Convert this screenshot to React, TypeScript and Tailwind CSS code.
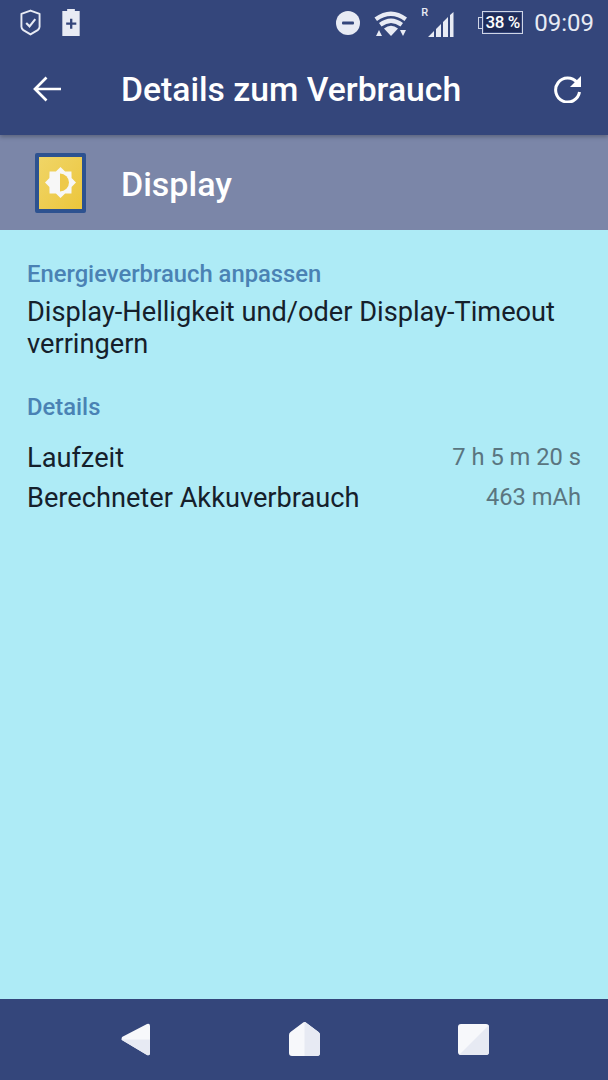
export default function App() {
  return (
    <div className="w-[608px] h-[1080px] flex flex-col bg-[#aeebf6] overflow-hidden font-['Roboto',sans-serif]">
      <div className="h-[135px] shrink-0 bg-[#34467b] flex flex-col relative z-10 shadow-[0_2px_4px_rgba(0,0,0,0.25)]">
        <div className="h-[44px] flex items-center pl-[20px] pr-[14px] pt-[1px]">
          <svg width="21" height="27" viewBox="0 0 22 28" fill="none">
            <path d="M11 1.500 20.500 5v13.500q0 2-2 3.500L11 26.500 3.500 22q-2-1.500-2-3.500V5Z" stroke="#e8ebf4" strokeWidth="2" strokeLinejoin="round" />
            <path d="M6.500 14.500 10 18l6-7.500" stroke="#e8ebf4" strokeWidth="2.200" />
          </svg>
          <svg width="18" height="27" viewBox="0 0 18 28" className="ml-[21px]">
            <path d="M5 0h8v2h5v26H0V2h5Z" fill="#e8ebf4" />
            <path d="M8 10h2.400v4H14.500v2.400h-4.100v4H8v-4H4v-2.400h4Z" fill="#34467b" />
          </svg>
          <div className="flex-1" />
          <svg width="24" height="24" viewBox="0 0 24 24">
            <circle cx="12" cy="12" r="12" fill="#e8ebf4" />
            <rect x="6" y="10.500" width="12" height="3" rx="1" fill="#34467b" />
          </svg>
          <svg width="34" height="28" viewBox="0 0 34 28" className="ml-[14px] mt-[1px]">
            <path d="M0.500 8.500Q17-3.500 33 8.500l-2.500 3.500Q17 2 3 12Z" fill="#e8ebf4" />
            <path d="M5 14Q17 5 29 14l-2.500 3.500Q17 10.500 7.500 17.500Z" fill="#e8ebf4" />
            <path d="M10 19.500Q17 14 24 19.500L17 27Z" fill="#e8ebf4" />
            <path d="M2 27l3-6 3 6ZM26 21h6l-3 6Z" fill="#e8ebf4" />
          </svg>
          <div className="relative w-[26px] h-[28px] ml-[20px] -mt-[3px]">
            <span className="absolute -left-[7px] top-0 text-[11px] leading-[12px] font-medium text-[#e8ebf4]">R</span>
            <svg width="26" height="26" viewBox="0 0 26 26" className="absolute left-0 top-[5px]">
              <path d="M0 25 6 19v6ZM8 17l5-5v13H8ZM15 10l5-5v20h-5ZM22 3l3.500-3v25H22Z" fill="#e8ebf4" />
            </svg>
          </div>
          <div className="ml-[24px] flex items-center">
            <div className="w-[4px] h-[12px] border border-r-0 border-[#cfd5e6]" />
            <div className="w-[41px] h-[23px] border border-[#cfd5e6] p-[1px]">
              <div className="h-full bg-[#1f2c59] flex items-center justify-center text-[17px] font-medium text-white whitespace-nowrap tracking-[-0.4px]">38 %</div>
            </div>
          </div>
          <span className="ml-[11px] text-[24px] text-[#e8ebf4]">09:09</span>
        </div>
        <div className="flex-1 flex items-center pl-[33px] pr-[26px] pb-[2px]">
          <svg width="28" height="26" viewBox="0 0 28 26" fill="none" stroke="#fff" strokeWidth="2.700">
            <path d="M28 13H2M13.500 1.500 2 13l11.500 11.500" />
          </svg>
          <span className="ml-[60px] pt-[4px] text-[33.700px] font-medium text-white flex-1 whitespace-nowrap">Details zum Verbrauch</span>
          <svg width="28" height="28" viewBox="0 0 28 28">
            <path d="M23 7.500A12 12 0 1 0 25.500 17" fill="none" stroke="#fff" strokeWidth="3" />
            <path d="M27 1v11H16Z" fill="#fff" />
          </svg>
        </div>
      </div>
      <div className="h-[95px] shrink-0 bg-[#7b86a8] flex items-center pl-[35px]">
        <div className="w-[51px] h-[60px] bg-linear-to-br from-[#f0d566] to-[#ecc63a] border-[4px] border-[#2d5290] rounded-[2px] flex items-center justify-center">
          <svg width="31" height="31" viewBox="0 0 31 31">
            <path d="M15.500 0 20.100 4.410 26.460 4.540 26.590 10.900 31 15.500 26.590 20.100 26.460 26.460 20.100 26.590 15.500 31 10.900 26.590 4.540 26.460 4.410 20.100 0 15.500 4.410 10.900 4.540 4.540 10.900 4.410Z" fill="#f7f7f7" />
            <path d="M15 6.500A9 9 0 0 1 15 24.500Z" fill="#eec94a" />
          </svg>
        </div>
        <span className="ml-[35px] pt-[4px] text-[34px] font-medium text-white">Display</span>
      </div>
      <div className="flex-1 flex flex-col px-[27px] pt-[29px]">
        <div className="text-[23.800px] leading-[30px] font-medium text-[#4a82b4]">Energieverbrauch anpassen</div>
        <div className="text-[27.200px] leading-[32px] text-[#15202b] mt-[7px]">Display-Helligkeit und/oder Display-Timeout verringern</div>
        <div className="text-[23.800px] leading-[30px] font-medium text-[#4a82b4] mt-[32px]">Details</div>
        <div className="flex justify-between items-center mt-[16px] h-[40px]">
          <span className="text-[27.200px] text-[#15202b]">Laufzeit</span>
          <span className="text-[23.700px] text-[#5a7580]">7 h 5 m 20 s</span>
        </div>
        <div className="flex justify-between items-center h-[40px]">
          <span className="text-[27.200px] text-[#15202b]">Berechneter Akkuverbrauch</span>
          <span className="text-[23.700px] text-[#5a7580]">463 mAh</span>
        </div>
      </div>
      <div className="h-[81px] shrink-0 bg-[#34467b] flex items-center pl-[121px] pr-[119px] justify-between pb-[1px]">
        <svg width="29" height="33" viewBox="0 0 29 33">
          <path d="M29 3q0-3-3-2L1 14q-1 2.500 0 3l25 15q3 1 3-2Z" fill="#f7f8fb" />
          <path d="M0 16.500h29V30q0 3-3 2Z" fill="#e7eaf3" />
        </svg>
        <svg width="31" height="34" viewBox="0 0 31 34">
          <path d="M15.500 0q1 0 2 1l12 9q1.500 1 1.500 3v18q0 3-3 3H3q-3 0-3-3V13q0-2 1.500-3l12-9q1-1 2-1Z" fill="#f7f8fb" />
          <path d="M15.500 0q1 0 2 1l12 9q1.500 1 1.500 3v18q0 3-3 3H15.500Z" fill="#e7eaf3" />
        </svg>
        <svg width="31" height="31" viewBox="0 0 31 31">
          <rect width="31" height="31" rx="3" fill="#f7f8fb" />
          <path d="M31 1v27q0 3-3 3H1Z" fill="#e7eaf3" />
        </svg>
      </div>
    </div>
  );
}
